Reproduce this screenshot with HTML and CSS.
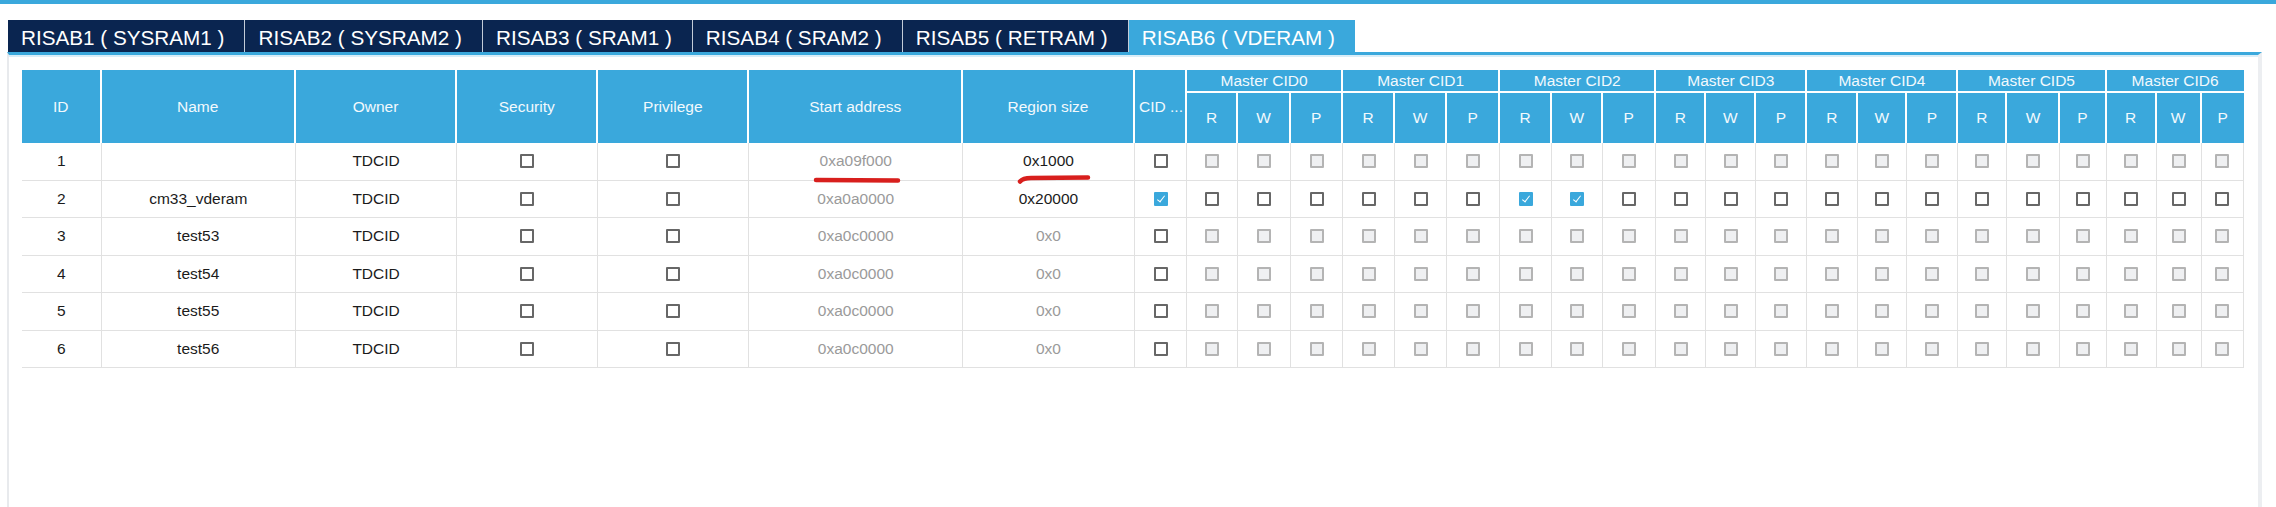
FILE: index.html
```html
<!DOCTYPE html>
<html>
<head>
<meta charset="utf-8">
<link rel="stylesheet" href="styles.css">
</head>
<body>
<div class="topbar"></div>
<div class="tabs">
  <div class="tab">RISAB1 ( SYSRAM1 )</div>
  <div class="tab">RISAB2 ( SYSRAM2 )</div>
  <div class="tab">RISAB3 ( SRAM1 )</div>
  <div class="tab">RISAB4 ( SRAM2 )</div>
  <div class="tab">RISAB5 ( RETRAM )</div>
  <div class="tab active">RISAB6 ( VDERAM )</div>
</div>
<div class="panel">
<table class="grid">
<colgroup>
  <col class="c-id"><col class="c-name"><col class="c-owner"><col class="c-sec"><col class="c-priv"><col class="c-start"><col class="c-size"><col class="c-cid">
  <col class="w51"><col class="w53"><col class="w52">
  <col class="w52"><col class="w52"><col class="w53">
  <col class="w52"><col class="w51"><col class="w53">
  <col class="w50"><col class="w50"><col class="w51">
  <col class="w51"><col class="w49"><col class="w51">
  <col class="w49"><col class="w53"><col class="w46">
  <col class="w50"><col class="w45"><col class="w42">
</colgroup>
<thead>
<tr class="grp">
  <th rowspan="2">ID</th>
  <th rowspan="2">Name</th>
  <th rowspan="2">Owner</th>
  <th rowspan="2">Security</th>
  <th rowspan="2">Privilege</th>
  <th rowspan="2">Start address</th>
  <th rowspan="2">Region size</th>
  <th rowspan="2" class="cidh">CID ...</th>
  <th colspan="3" class="g">Master CID0</th>
  <th colspan="3" class="g">Master CID1</th>
  <th colspan="3" class="g">Master CID2</th>
  <th colspan="3" class="g">Master CID3</th>
  <th colspan="3" class="g">Master CID4</th>
  <th colspan="3" class="g">Master CID5</th>
  <th colspan="3" class="g last">Master CID6</th>
</tr>
<tr class="sub">
  <th>R</th><th>W</th><th>P</th>
  <th>R</th><th>W</th><th>P</th>
  <th>R</th><th>W</th><th>P</th>
  <th>R</th><th>W</th><th>P</th>
  <th>R</th><th>W</th><th>P</th>
  <th>R</th><th>W</th><th>P</th>
  <th>R</th><th>W</th><th class="last">P</th>
</tr>
</thead>
<tbody>
<tr>
  <td>1</td><td></td><td>TDCID</td>
  <td><span class="cb"></span></td><td><span class="cb"></span></td>
  <td class="mute mark">0xa09f000<svg class="ink ink1" viewBox="0 0 88 8"><path d="M3 4 L85 4.5" /></svg></td>
  <td class="mark">0x1000<svg class="ink ink2" viewBox="0 0 74 9"><path d="M3 6.5 Q6 3 14 3 L71 2.5" /></svg></td>
  <td><span class="cb"></span></td>
  <td><span class="cb dis"></span></td><td><span class="cb dis"></span></td><td><span class="cb dis"></span></td>
  <td><span class="cb dis"></span></td><td><span class="cb dis"></span></td><td><span class="cb dis"></span></td>
  <td><span class="cb dis"></span></td><td><span class="cb dis"></span></td><td><span class="cb dis"></span></td>
  <td><span class="cb dis"></span></td><td><span class="cb dis"></span></td><td><span class="cb dis"></span></td>
  <td><span class="cb dis"></span></td><td><span class="cb dis"></span></td><td><span class="cb dis"></span></td>
  <td><span class="cb dis"></span></td><td><span class="cb dis"></span></td><td><span class="cb dis"></span></td>
  <td><span class="cb dis"></span></td><td><span class="cb dis"></span></td><td><span class="cb dis"></span></td>
</tr>
<tr>
  <td>2</td><td>cm33_vderam</td><td>TDCID</td>
  <td><span class="cb"></span></td><td><span class="cb"></span></td>
  <td class="mute">0xa0a0000</td>
  <td>0x20000</td>
  <td><span class="cb on"></span></td>
  <td><span class="cb"></span></td><td><span class="cb"></span></td><td><span class="cb"></span></td>
  <td><span class="cb"></span></td><td><span class="cb"></span></td><td><span class="cb"></span></td>
  <td><span class="cb on"></span></td><td><span class="cb on"></span></td><td><span class="cb"></span></td>
  <td><span class="cb"></span></td><td><span class="cb"></span></td><td><span class="cb"></span></td>
  <td><span class="cb"></span></td><td><span class="cb"></span></td><td><span class="cb"></span></td>
  <td><span class="cb"></span></td><td><span class="cb"></span></td><td><span class="cb"></span></td>
  <td><span class="cb"></span></td><td><span class="cb"></span></td><td><span class="cb"></span></td>
</tr>
<tr>
  <td>3</td><td>test53</td><td>TDCID</td>
  <td><span class="cb"></span></td><td><span class="cb"></span></td>
  <td class="mute">0xa0c0000</td>
  <td class="mute">0x0</td>
  <td><span class="cb"></span></td>
  <td><span class="cb dis"></span></td><td><span class="cb dis"></span></td><td><span class="cb dis"></span></td>
  <td><span class="cb dis"></span></td><td><span class="cb dis"></span></td><td><span class="cb dis"></span></td>
  <td><span class="cb dis"></span></td><td><span class="cb dis"></span></td><td><span class="cb dis"></span></td>
  <td><span class="cb dis"></span></td><td><span class="cb dis"></span></td><td><span class="cb dis"></span></td>
  <td><span class="cb dis"></span></td><td><span class="cb dis"></span></td><td><span class="cb dis"></span></td>
  <td><span class="cb dis"></span></td><td><span class="cb dis"></span></td><td><span class="cb dis"></span></td>
  <td><span class="cb dis"></span></td><td><span class="cb dis"></span></td><td><span class="cb dis"></span></td>
</tr>
<tr>
  <td>4</td><td>test54</td><td>TDCID</td>
  <td><span class="cb"></span></td><td><span class="cb"></span></td>
  <td class="mute">0xa0c0000</td>
  <td class="mute">0x0</td>
  <td><span class="cb"></span></td>
  <td><span class="cb dis"></span></td><td><span class="cb dis"></span></td><td><span class="cb dis"></span></td>
  <td><span class="cb dis"></span></td><td><span class="cb dis"></span></td><td><span class="cb dis"></span></td>
  <td><span class="cb dis"></span></td><td><span class="cb dis"></span></td><td><span class="cb dis"></span></td>
  <td><span class="cb dis"></span></td><td><span class="cb dis"></span></td><td><span class="cb dis"></span></td>
  <td><span class="cb dis"></span></td><td><span class="cb dis"></span></td><td><span class="cb dis"></span></td>
  <td><span class="cb dis"></span></td><td><span class="cb dis"></span></td><td><span class="cb dis"></span></td>
  <td><span class="cb dis"></span></td><td><span class="cb dis"></span></td><td><span class="cb dis"></span></td>
</tr>
<tr>
  <td>5</td><td>test55</td><td>TDCID</td>
  <td><span class="cb"></span></td><td><span class="cb"></span></td>
  <td class="mute">0xa0c0000</td>
  <td class="mute">0x0</td>
  <td><span class="cb"></span></td>
  <td><span class="cb dis"></span></td><td><span class="cb dis"></span></td><td><span class="cb dis"></span></td>
  <td><span class="cb dis"></span></td><td><span class="cb dis"></span></td><td><span class="cb dis"></span></td>
  <td><span class="cb dis"></span></td><td><span class="cb dis"></span></td><td><span class="cb dis"></span></td>
  <td><span class="cb dis"></span></td><td><span class="cb dis"></span></td><td><span class="cb dis"></span></td>
  <td><span class="cb dis"></span></td><td><span class="cb dis"></span></td><td><span class="cb dis"></span></td>
  <td><span class="cb dis"></span></td><td><span class="cb dis"></span></td><td><span class="cb dis"></span></td>
  <td><span class="cb dis"></span></td><td><span class="cb dis"></span></td><td><span class="cb dis"></span></td>
</tr>
<tr>
  <td>6</td><td>test56</td><td>TDCID</td>
  <td><span class="cb"></span></td><td><span class="cb"></span></td>
  <td class="mute">0xa0c0000</td>
  <td class="mute">0x0</td>
  <td><span class="cb"></span></td>
  <td><span class="cb dis"></span></td><td><span class="cb dis"></span></td><td><span class="cb dis"></span></td>
  <td><span class="cb dis"></span></td><td><span class="cb dis"></span></td><td><span class="cb dis"></span></td>
  <td><span class="cb dis"></span></td><td><span class="cb dis"></span></td><td><span class="cb dis"></span></td>
  <td><span class="cb dis"></span></td><td><span class="cb dis"></span></td><td><span class="cb dis"></span></td>
  <td><span class="cb dis"></span></td><td><span class="cb dis"></span></td><td><span class="cb dis"></span></td>
  <td><span class="cb dis"></span></td><td><span class="cb dis"></span></td><td><span class="cb dis"></span></td>
  <td><span class="cb dis"></span></td><td><span class="cb dis"></span></td><td><span class="cb dis"></span></td>
</tr>
</tbody>
</table>
</div>
</body>
</html>
```
FILE: styles.css
```css
html, body {
  margin: 0;
  padding: 0;
  background: #fff;
}
body {
  font-family: "Liberation Sans", Arial, sans-serif;
  height: 507px;
  overflow: hidden;
  display: flex;
  flex-direction: column;
}
.topbar {
  flex: none;
  height: 4px;
  background: #3aa8dc;
}
.tabs {
  flex: none;
  display: flex;
  height: 32px;
  margin: 16px 0 0 8px;
}
.tab {
  background: #0a2550;
  color: #fff;
  font-size: 20.7px;
  line-height: 29px;
  padding: 3px 20px 0 13px;
  border-right: 1px solid #c3ccd8;
  white-space: nowrap;
}
.tab.active {
  background: #3aa8dc;
  border-right: none;
}
.panel {
  flex: 1;
  margin: 0 14px 0 7px;
  border-top: 3px solid #3aa8dc;
  border-left: 2px solid #e8eaed;
  border-right: 4px solid #eceef1;
  box-shadow: inset 0 2px 0 #d8edf8;
  padding: 15px 0 0 12.7px;
}
.grid {
  table-layout: fixed;
  width: 2222px;
  border-collapse: separate;
  border-spacing: 0;
  font-size: 15.5px;
}
.c-id { width: 80px; }
.c-name { width: 194px; }
.c-owner { width: 161.6px; }
.c-sec { width: 140.7px; }
.c-priv { width: 151.3px; }
.c-start { width: 213.4px; }
.c-size { width: 172px; }
.c-cid { width: 52px; }
.w42 { width: 42px; }
.w45 { width: 45px; }
.w46 { width: 46px; }
.w49 { width: 49px; }
.w50 { width: 50px; }
.w51 { width: 51px; }
.w52 { width: 52px; }
.w53 { width: 53px; }

.grid th {
  box-sizing: border-box;
  background: #3aa8dc;
  color: #f2f9fd;
  font-weight: normal;
  padding: 0;
  border-right: 2px solid #fff;
  text-align: center;
  vertical-align: middle;
  white-space: nowrap;
  overflow: hidden;
}
.grid th.last {
  border-right: none;
}
.grid th.g {
  border-bottom: 2px solid #fff;
}
.grid tr.grp {
  height: 23px;
}
.grid tr.sub {
  height: 50px;
}
.grid th.cidh {
  text-align: left;
  padding-left: 4px;
}
.grid td {
  box-sizing: border-box;
  padding: 0;
  text-align: center;
  vertical-align: middle;
  color: #1b1b1b;
  border-right: 1px solid #e1e1e1;
  border-bottom: 1px solid #e1e1e1;
  white-space: nowrap;
}
.grid tbody tr {
  height: 37.5px;
}
.grid td.mute {
  color: #9a9a9a;
}
.grid td.mark {
  position: relative;
}
.cb {
  display: block;
  margin: 0 auto;
  box-sizing: border-box;
  width: 14px;
  height: 14px;
  border: 2px solid #676767;
  background: #fff;
  border-radius: 1px;
}
.cb.dis {
  border-color: #b4b4b4;
  background: #eff0f2;
}
.cb.on {
  position: relative;
  border-color: #3aa8dc;
  background: #3aa8dc;
}
.cb.on::after {
  content: "";
  position: absolute;
  left: 3px;
  top: 0px;
  width: 3px;
  height: 7px;
  border: solid #fff;
  border-width: 0 1.6px 1.6px 0;
  transform: rotate(38deg);
}
.ink {
  position: absolute;
  fill: none;
  stroke: #d81f1d;
  stroke-width: 4.5;
  stroke-linecap: round;
}
.ink1 {
  left: 64px;
  top: 32.5px;
  width: 88px;
  height: 8px;
}
.ink2 {
  left: 54.5px;
  top: 32px;
  width: 74px;
  height: 9px;
}
```
